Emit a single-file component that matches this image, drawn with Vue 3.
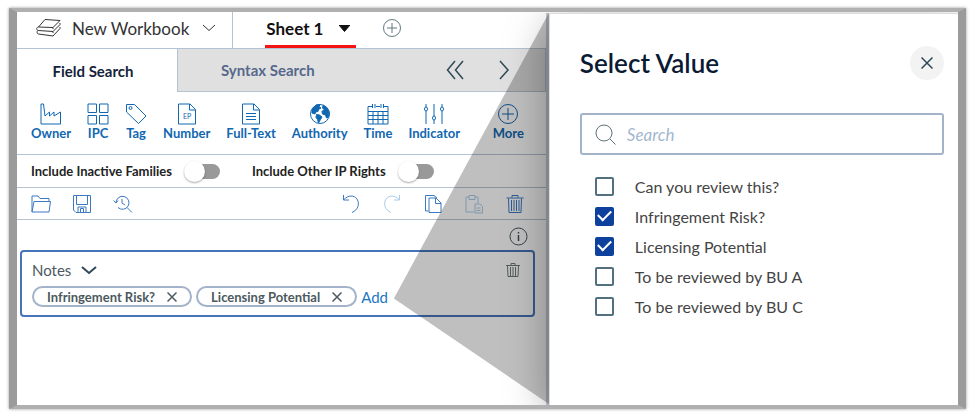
<template>
  <main class="frame">
    <section class="workspace">
      <header class="book-bar">
        <button class="book-name">
          <svg width="27" height="20" viewBox="0 0 27 20" class="line">
            <path d="M10 1.500 25 2.500 18 9.500 3.500 9z" />
            <path d="M3.500 9C1 9.500 1 12 3.500 12.500L18 13.500l7-7V5M18 9.500v1.500" />
            <path d="M3 12.500c-1.500 1-1 3.500.5 3.500l14.500 2 7-7.500V9M18 13.500v1.500" />
          </svg>
          <span>New Workbook</span>
          <svg width="14" height="8" viewBox="0 0 14 8" class="line">
            <path d="M1 1l6 5.500L13 1" />
          </svg>
        </button>
        <button class="sheet">
          <span>Sheet 1</span>
          <svg width="11" height="7" viewBox="0 0 11 7"><path d="M0 0h11L5.500 6.500z" fill="#111" /></svg>
        </button>
        <button class="add-sheet" aria-label="Add sheet">
          <svg width="20" height="20" viewBox="0 0 20 20" class="line">
            <circle cx="10" cy="10" r="8.500" />
            <path d="M10 5v10M5 10h10" />
          </svg>
        </button>
      </header>

      <nav class="tabs">
        <button class="tab active">Field Search</button>
        <div class="tab-rest">
          <button class="tab">Syntax Search</button>
          <button class="arrow" aria-label="Collapse">
            <svg width="18" height="20" viewBox="0 0 18 20"><path d="M9 1 1.500 10 9 19M17 1 9.500 10l7.500 9" /></svg>
          </button>
          <button class="arrow" aria-label="Expand">
            <svg width="18" height="20" viewBox="0 0 18 20"><path d="M5 1l8 9-8 9" /></svg>
          </button>
        </div>
      </nav>

      <div class="fields">
        <button v-for="field in fields" :key="field.name" class="field">
          <svg width="22" height="22" viewBox="0 0 22 22">
            <path :d="field.path" />
            <path v-if="field.fill" :d="field.fill" class="solid" />
            <text v-if="field.text" x="11" y="16">{{ field.text }}</text>
          </svg>
          <span>{{ field.name }}</span>
        </button>
      </div>

      <div class="switches">
        <label v-for="item in switches" :key="item.name" class="switch">
          <span>{{ item.name }}</span>
          <input v-model="item.on" type="checkbox" role="switch" />
        </label>
      </div>

      <div class="tools">
        <button
          v-for="tool in tools"
          :key="tool.name"
          :class="['tool', { faded: tool.faded, first: tool.first }]"
          :aria-label="tool.name"
        >
          <svg width="20" height="20" viewBox="0 0 20 20"><path :d="tool.path" /></svg>
        </button>
      </div>

      <div class="info">
        <button aria-label="Information">
          <svg width="19" height="19" viewBox="0 0 19 19">
            <circle cx="9.500" cy="9.500" r="8.500" />
            <path d="M9.500 8v6M9.500 5v1.500" stroke-width="1.500" />
          </svg>
        </button>
      </div>

      <div class="query">
        <div class="query-top">
          <button class="query-name">
            Notes
            <svg width="16" height="9" viewBox="0 0 16 9"><path d="M1 1l7 6 7-6" /></svg>
          </button>
          <button class="remove" aria-label="Delete field">
            <svg width="14" height="16" viewBox="0 0 14 16">
              <path d="M0 3.500h14M5 3V1.500h4V3M1.500 4l.5 10.500h10L12.500 4M4.500 5v9M7 5v9M9.500 5v9" />
            </svg>
          </button>
        </div>
        <div class="chips">
          <span v-for="value in chosen" :key="value.name" class="chip">
            {{ value.name }}
            <button :aria-label="`Remove ${value.name}`" @click="value.checked = false">
              <svg width="10" height="10" viewBox="0 0 10 10"><path d="M.5.5l9 9M9.500.5l-9 9" /></svg>
            </button>
          </span>
          <a href="#" class="add" @click.prevent>Add</a>
        </div>
      </div>

      <!-- wedge that joins the Add link to the value panel -->
      <div class="wedge"></div>
    </section>

    <aside class="panel">
      <div class="panel-head">
        <h1>Select Value</h1>
        <button class="close" aria-label="Close">
          <svg width="12" height="12" viewBox="0 0 12 12"><path d="M.5.5l11 11M11.500.5l-11 11" /></svg>
        </button>
      </div>
      <label class="search">
        <svg width="21" height="21" viewBox="0 0 21 21">
          <circle cx="9" cy="9" r="8" />
          <path d="M15 15l5.500 5.500" />
        </svg>
        <input v-model="keyword" type="text" placeholder="Search" aria-label="Search" />
      </label>
      <ul class="values">
        <li v-for="value in shown" :key="value.name">
          <label>
            <input v-model="value.checked" type="checkbox" />
            <span>{{ value.name }}</span>
          </label>
        </li>
      </ul>
    </aside>
  </main>
</template>

<script setup>
import { computed, ref } from 'vue'

const fields = [
  { name: 'Owner', path: 'M1 21V1h2.500l1.500 12 4.500-4v4l4.500-4v4l6.500-4v12z' },
  { name: 'IPC', path: 'M1 1h8.500v8.500H1zM12.500 1H21v8.500h-8.500zM1 12.500h8.500V21H1zM12.500 12.500H21V21h-8.500z' },
  { name: 'Tag', path: 'M1.500 1.500h8L21 13l-7.500 7.500L1.500 9zM4 5a1.500 1.500 0 1 0 3 0a1.500 1.500 0 1 0-3 0' },
  { name: 'Number', path: 'M2.500 1h11.500l5.500 5.500V21h-17zM13.500 1v6h6', text: 'EP' },
  { name: 'Full-Text', path: 'M2.500 1h11.500l5.500 5.500V21h-17zM13.500 1v6h6M6 10.500h10M6 13.500h10M6 16.500h10' },
  {
    name: 'Authority',
    path: 'M1.500 11a9.500 9.500 0 1 0 19 0a9.500 9.500 0 1 0-19 0',
    fill: 'M3 6l4-4 4-.5-1 2 2 1.500-2.500 1.500L9 8.500 6.500 9l-.5 2L3 10zM7.500 11.500l3 .5 2.500 2-1.500 2.500-2 3.500-1-3.500-1.500-2zM14 2.500l4 2.500 2 4-.5 5-2 1-1-3-3-1-.5-2.500 2-2-1.500-1.500z',
  },
  { name: 'Time', path: 'M5.500 3.500H1V21h20V3.500h-4.500M9 3.500h4M5.500 1v4M8 1v4M14 1v4M16.500 1v4M1 8.500h20M1 12.500h20M1 16.500h20M6 8.500V21M11 8.500V21M16 8.500V21' },
  {
    name: 'Indicator',
    path: 'M3 1v3M3 8v13M11 1v12M11 17v4M19 1v3M19 8v13M1.500 6a1.500 2 0 1 0 3 0a1.500 2 0 1 0-3 0M9.500 15a1.500 2 0 1 0 3 0a1.500 2 0 1 0-3 0M17.500 6a1.500 2 0 1 0 3 0a1.500 2 0 1 0-3 0',
  },
  { name: 'More', path: 'M1.500 11a9.500 9.500 0 1 0 19 0a9.500 9.500 0 1 0-19 0M11 5v12M5 11h12' },
]

const switches = ref([
  { name: 'Include Inactive Families', on: false },
  { name: 'Include Other IP Rights', on: false },
])

const tools = [
  { name: 'Open', path: 'M1 6v12h17l1.500-10.500H3L1 18M1 6V2h6l2 2.500h9V7' },
  { name: 'Save', path: 'M1.500 1.500h17v17H4l-2.500-2.500zM4.500 1.500v9h11v-9M6 18v-5h8v5M8.500 18v-3.500h3V18' },
  { name: 'History', path: 'M3 9a6.500 6.500 0 1 1 2 4.500M.5 6.500 3 9l2-2.500M14 13.500l5 5M9 5v4l3 2' },
  { name: 'Undo', path: 'M2.500 1v5h5.500M3 5.500C7 1 13 1 16 5c3 5 1 11-5 13.500', first: true },
  { name: 'Redo', path: 'M17.500 1v5H12M17 5.500C13 1 7 1 4 5c-3 5-1 11 5 13.500', faded: true },
  { name: 'Copy', path: 'M6 4h7l5 5v9.500H6zM12.500 4v5.500H18M5.500 17h-3V1.500H11L14 4' },
  { name: 'Paste', path: 'M5 3H2v15h8M11 3h3v6M5 1.500h6v4H5zM11 10h5l2.500 2.500V19H11zM12.500 14h4M12.500 16.500h4', faded: true },
  { name: 'Delete', path: 'M1.500 4h17M7 3.500v-2h6v2M3.500 4.500l.5 14h12l.5-14M6.500 6v11M9 6v11M11.500 6v11M14 6v11' },
]

const values = ref([
  { name: 'Can you review this?', checked: false },
  { name: 'Infringement Risk?', checked: true },
  { name: 'Licensing Potential', checked: true },
  { name: 'To be reviewed by BU A', checked: false },
  { name: 'To be reviewed by BU C', checked: false },
])
const keyword = ref('')

const chosen = computed(() => values.value.filter((v) => v.checked))
const shown = computed(() =>
  values.value.filter((v) => v.name.toLowerCase().includes(keyword.value.toLowerCase()))
)
</script>

<style>
body {
  margin: 0;
  background: #fff;
}
#app {
  display: flex;
  min-height: 100vh;
}
</style>

<style scoped>
* {
  box-sizing: border-box;
}
button {
  display: flex;
  align-items: center;
  padding: 0;
  border: 0;
  background: none;
  font: inherit;
  color: inherit;
  white-space: nowrap;
  cursor: pointer;
}
svg {
  flex: none;
  fill: none;
  stroke: currentColor;
}
.frame {
  flex: 1;
  display: grid;
  grid-template-columns: minmax(0, 13fr) minmax(0, 10fr);
  margin: 8px 9px;
  border: solid #9b9b9b;
  border-width: 4px 8px;
  border-top-color: #b0b0b0;
  border-bottom-color: #b0b0b0;
  box-shadow: 0 0 3px #999;
  overflow: hidden;
  font-family: Lato, sans-serif;
  color: #2c3e50;
}
.workspace {
  position: relative;
  padding-right: 3px;
}

/* workbook bar */
.book-bar {
  display: flex;
  height: 37px;
  border-bottom: 1px solid #b4c3d3;
}
.line {
  color: #333;
}
.book-name {
  gap: 10px;
  padding: 0 16px 4px 18px;
  border-right: 1px solid #b4c3d3;
  font-size: 17px;
  color: #333;
}
.book-name svg:last-child {
  margin-left: 3px;
}
.sheet {
  gap: 16px;
  margin-left: 32px;
  padding: 0 6px 0 1px;
  border-bottom: 3px solid #f51414;
  font-size: 17px;
  font-weight: bold;
  color: #111;
}
.add-sheet {
  margin-left: 26px;
  padding-bottom: 4px;
}
.add-sheet svg {
  color: #5f7a80;
}

/* search tabs */
.tabs {
  display: flex;
  height: 43px;
  font-size: 15px;
  font-weight: bold;
}
.tab.active {
  justify-content: center;
  width: 160px;
  padding-right: 8px;
  color: #14233a;
}
.tab-rest {
  flex: 1;
  display: flex;
  gap: 31px;
  padding: 0 32px 0 43px;
  border: solid #b4c3d3;
  border-width: 0 1px 1px;
  background: #e0e0e0;
  color: #56688c;
}
.tab-rest .tab {
  margin-right: auto;
}
.arrow {
  color: #2f4858;
}
.arrow svg {
  stroke-width: 1.5;
}

/* field shortcuts */
.fields {
  display: flex;
  gap: 16px;
  height: 63px;
  padding: 11px 22px 0 14px;
  border-bottom: 1px solid #b4c3d3;
  font-size: 13px;
  font-weight: bold;
  line-height: 15px;
  color: #1167b1;
}
.field {
  flex-direction: column;
  gap: 1px;
}
.field:last-child {
  margin-left: auto;
}
.field text {
  fill: currentColor;
  stroke: none;
  font-size: 7px;
  font-weight: normal;
  text-anchor: middle;
}
.solid {
  fill: currentColor;
}

/* switches */
.switches {
  display: flex;
  gap: 32px;
  height: 33px;
  padding-left: 14px;
  border-bottom: 1px solid #b4c3d3;
  font-size: 13px;
  font-weight: bold;
  color: #222;
}
.switch {
  display: flex;
  align-items: center;
  gap: 12px;
  white-space: nowrap;
}
.switch input {
  appearance: none;
  display: flex;
  align-items: center;
  width: 36px;
  height: 15px;
  margin: 0;
  border-radius: 8px;
  background: linear-gradient(to right, transparent 10px, #999 10px);
}
.switch input::before {
  content: '';
  width: 21px;
  height: 21px;
  flex: none;
  border-radius: 50%;
  background: #fff;
  box-shadow: 0 1px 2px rgba(0, 0, 0, 0.35);
}
.switch input:checked {
  justify-content: flex-end;
  background: #1167b1;
}

/* toolbar */
.tools {
  display: flex;
  gap: 21px;
  height: 32px;
  padding: 0 21px 0 14px;
  border-bottom: 1px solid #b4c3d3;
  color: #3d78c4;
}
.tool.first {
  margin-left: auto;
}
.faded {
  color: #a9cbe6;
}
.info {
  display: flex;
  justify-content: flex-end;
  height: 30px;
  padding: 2px 18px 0 0;
  color: #46555c;
}

/* query row */
.query {
  margin: 0 11px 0 3px;
  padding: 9px 13px 8px 10px;
  border: 2px solid #4674ba;
  border-radius: 4px;
  color: #4c5a60;
}
.query-top {
  display: flex;
  justify-content: space-between;
  height: 18px;
  margin-bottom: 7px;
}
.query-name {
  gap: 10px;
  font-size: 15px;
}
.query-name svg {
  color: #2f4858;
  stroke-width: 2;
}
.remove {
  color: #6f7d74;
}
.chips {
  display: flex;
  align-items: center;
  gap: 4px;
}
.chip {
  display: flex;
  align-items: center;
  gap: 12px;
  height: 21px;
  padding: 0 13px;
  border: 2px solid #a3b3c9;
  border-radius: 11px;
  font-size: 13px;
  font-weight: bold;
  white-space: nowrap;
}
.chip svg {
  stroke-width: 1.5;
}
.add {
  font-size: 15px;
  color: #1d75c4;
  text-decoration: none;
}
.wedge {
  position: absolute;
  top: 1px;
  right: 0;
  bottom: 1px;
  width: 155px;
  background: rgba(0, 0, 0, 0.25);
  clip-path: polygon(0 73%, 100% 0, 100% 100%);
  pointer-events: none;
}

/* value panel */
.panel {
  position: relative;
  margin-top: 1px;
  padding: 32px 14px 20px 30px;
  border: solid #ddd;
  border-width: 1px 0 0 1px;
  background: #fff;
  box-shadow:
    -3px 0 0 rgba(60, 70, 90, 0.3),
    0 10px 40px rgba(0, 0, 0, 0.35);
}
.panel-head {
  display: flex;
  align-items: center;
  justify-content: space-between;
  height: 34px;
}
h1 {
  margin: 0;
  font-size: 26px;
  font-weight: 600;
  line-height: 30px;
  color: #0b1a33;
}
.close {
  justify-content: center;
  width: 34px;
  height: 34px;
  border-radius: 50%;
  background: #f3f3f3;
  color: #2f4858;
}
.close svg {
  stroke-width: 1.5;
}
.search {
  display: flex;
  align-items: center;
  gap: 11px;
  height: 42px;
  margin-top: 33px;
  padding: 0 13px;
  border: 2px solid #a3b3c9;
  border-radius: 3px;
  color: #5f7378;
}
.search input {
  flex: 1;
  min-width: 0;
  padding: 0;
  border: 0;
  outline: none;
  font: 17px Lato, sans-serif;
}
.search input::placeholder {
  font-style: italic;
  color: #a3b7cf;
}
.values {
  margin: 16px 0 0;
  padding: 0 0 0 15px;
  list-style: none;
}
.values label {
  display: flex;
  align-items: center;
  gap: 21px;
  height: 30px;
  font-size: 16px;
  color: #444;
}
.values input {
  appearance: none;
  display: grid;
  place-items: center;
  width: 19px;
  height: 19px;
  margin: 0;
  border: 2px solid #527080;
  border-radius: 2px;
}
.values input:checked {
  border-color: #0d419d;
  background: #0d419d;
}
.values input:checked::before {
  content: '';
  width: 11px;
  height: 6px;
  margin-bottom: 4px;
  border: solid #fff;
  border-width: 0 0 2px 2px;
  transform: rotate(-45deg);
}
</style>
